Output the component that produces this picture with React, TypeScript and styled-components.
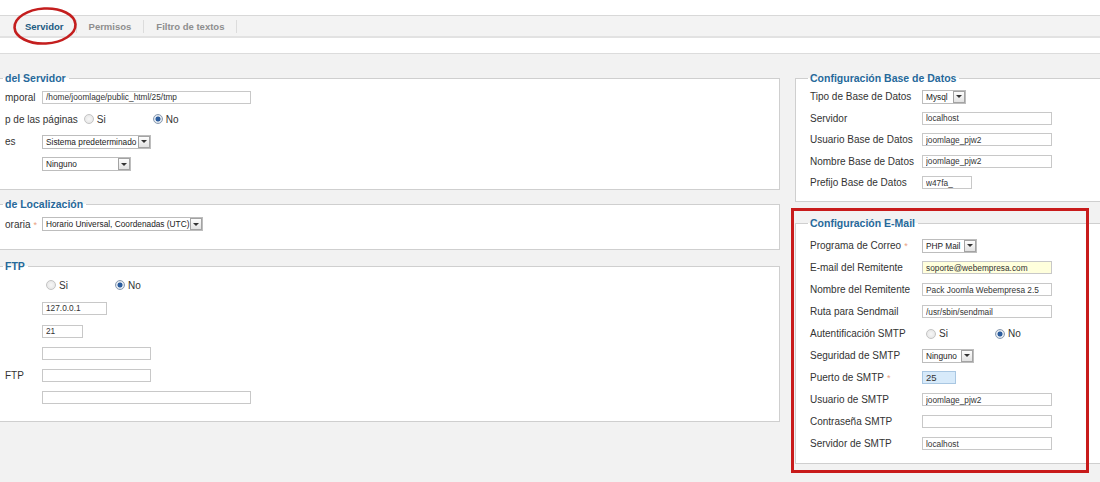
import React from "react";
import styled, { createGlobalStyle } from "styled-components";

const GlobalStyle = createGlobalStyle`
  html, body { margin: 0; padding: 0; }
  body {
    background: #fff;
    font-family: "Liberation Sans", Arial, sans-serif;
    overflow: hidden;
  }
`;

const Page = styled.div`
  position: relative;
  width: 1100px;
  height: 482px;
  overflow: hidden;
  background: #fff;
`;

const TopSpace = styled.div`
  height: 15px;
`;

const TabBar = styled.nav`
  height: 20px;
  border-top: 1px solid #d8d8d8;
  border-bottom: 2px solid #e2e2e2;
  background: #f3f3f3;
  display: flex;
  align-items: center;
  padding-left: 13px;
`;

const Tab = styled.span<{ $active?: boolean }>`
  font-size: 9.5px;
  font-weight: bold;
  line-height: 13px;
  padding: 0 12px;
  border-right: 1px solid #dcdcdc;
  color: ${(p) => (p.$active ? "#1b5b82" : "#8e8e8e")};
`;

const SubBar = styled.div`
  height: 15px;
  border-bottom: 1px solid #dcdcdc;
`;

const Content = styled.main`
  background: #f2f2f2;
  height: 428px;
  display: flex;
  align-items: flex-start;
  gap: 15px;
  padding-top: 18px;
  box-sizing: border-box;
`;

const LeftColumn = styled.div`
  flex: none;
  width: 790px;
  margin-left: -10px;
`;

const RightColumn = styled.div`
  flex: none;
  width: 330px;
`;

const Fieldset = styled.fieldset<{ $pt: number; $pb: number; $mb: number }>`
  margin: 0 0 ${(p) => p.$mb}px;
  border: 1px solid #cfcfcf;
  background: #fff;
  padding: ${(p) => p.$pt}px 0 ${(p) => p.$pb}px 14px;
  min-width: 0;
`;

const Legend = styled.legend`
  font-size: 10.5px;
  font-weight: bold;
  line-height: 13px;
  color: #26699a;
  padding: 0 3px 0 2px;
  margin-left: -2px;
`;

const Row = styled.div<{ $h?: number }>`
  display: flex;
  align-items: center;
  height: ${(p) => p.$h ?? 22}px;
`;

const Label = styled.label<{ $w: number }>`
  flex: none;
  min-width: ${(p) => p.$w}px;
  padding-right: 2px;
  box-sizing: border-box;
  font-size: 10px;
  color: #333;
  white-space: nowrap;
`;

const Req = styled.span`
  color: #eaa17e;
  font-size: 9px;
  margin-left: 3px;
`;

const Field = styled.input<{ $w: number; $tone?: "yellow" | "blue" }>`
  width: ${(p) => p.$w}px;
  height: 13px;
  box-sizing: border-box;
  margin: 0;
  padding: 0 3px;
  border: 1px solid ${(p) => (p.$tone === "blue" ? "#a9c7e2" : "#c8c8c8")};
  background: ${(p) =>
    p.$tone === "yellow" ? "#ffffdc" : p.$tone === "blue" ? "#d7eafa" : "#fff"};
  font-family: "Liberation Sans", Arial, sans-serif;
  font-size: ${(p) => (p.$tone === "blue" ? "9.5px" : "8.3px")};
  color: #333;
  outline: none;
`;

const Select = styled.div<{ $w: number }>`
  display: inline-flex;
  align-items: center;
  width: ${(p) => p.$w}px;
  height: 14px;
  box-sizing: border-box;
  border: 1px solid #bdbdbd;
  background: #fff;
  padding-left: 3px;
  font-size: 8.3px;
  color: #222;
`;

const SelectText = styled.span`
  flex: 1;
  white-space: nowrap;
  overflow: hidden;
`;

const Arrow = styled.span`
  flex: none;
  width: 12px;
  height: 12px;
  box-sizing: border-box;
  border: 1px solid #a3a3a3;
  background: linear-gradient(#fdfdfd, #e2e2e2);
  display: flex;
  align-items: center;
  justify-content: center;
  &::after {
    content: "";
    border-left: 3px solid transparent;
    border-right: 3px solid transparent;
    border-top: 3px solid #333;
  }
`;

const Options = styled.div`
  display: flex;
  margin-left: 4px;
`;

const Option = styled.span`
  display: flex;
  align-items: center;
  width: 69px;
  font-size: 10px;
  color: #333;
`;

const Radio = styled.span<{ $checked?: boolean }>`
  width: 10px;
  height: 10px;
  box-sizing: border-box;
  border-radius: 50%;
  margin-right: 3px;
  border: 1px solid ${(p) => (p.$checked ? "#8a9bb0" : "#c4c4c4")};
  background: ${(p) =>
    p.$checked
      ? "radial-gradient(circle, #2c5d9e 0 2.2px, #dfe6ee 2.8px)"
      : "radial-gradient(circle, #f7f7f7 0, #e2e2e2 100%)"};
`;

const Ellipse = styled.svg`
  position: absolute;
  left: 13px;
  top: 7px;
  overflow: visible;
`;

const Highlight = styled.div`
  position: absolute;
  left: 791px;
  top: 208px;
  width: 298px;
  height: 265px;
  box-sizing: border-box;
  border: 3.5px solid #c81b1b;
`;

const RadioPair = ({ noChecked }: { noChecked: boolean }) => (
  <Options>
    {[
      { t: "Si", c: !noChecked },
      { t: "No", c: noChecked },
    ].map((o) => (
      <Option key={o.t}>
        <Radio $checked={o.c} />
        {o.t}
      </Option>
    ))}
  </Options>
);

const Sel = ({ w, text }: { w: number; text: string }) => (
  <Select $w={w}>
    <SelectText>{text}</SelectText>
    <Arrow />
  </Select>
);

export default function App() {
  const L = 37;
  const R = 112;
  return (
    <Page>
      <GlobalStyle />
      <TopSpace />
      <TabBar>
        <Tab $active>Servidor</Tab>
        <Tab>Permisos</Tab>
        <Tab>Filtro de textos</Tab>
      </TabBar>
      <SubBar />
      <Content>
        <LeftColumn>
          <Fieldset $pt={1} $pb={14} $mb={8}>
            <Legend>del Servidor</Legend>
            <Row>
              <Label $w={L}>mporal</Label>
              <Field $w={209} readOnly defaultValue="/home/joomlage/public_html/25/tmp" />
            </Row>
            <Row>
              <Label $w={L}>p de las páginas</Label>
              <RadioPair noChecked />
            </Row>
            <Row $h={23}>
              <Label $w={L}>es</Label>
              <Sel w={109} text="Sistema predeterminado" />
            </Row>
            <Row>
              <Label $w={L} />
              <Sel w={89} text="Ninguno" />
            </Row>
          </Fieldset>
          <Fieldset $pt={2} $pb={14} $mb={10}>
            <Legend>de Localización</Legend>
            <Row>
              <Label $w={L}>
                oraria<Req>*</Req>
              </Label>
              <Sel w={161} text="Horario Universal, Coordenadas (UTC)" />
            </Row>
          </Fieldset>
          <Fieldset $pt={1} $pb={13} $mb={0}>
            <Legend>FTP</Legend>
            <Row>
              <Label $w={L} />
              <RadioPair noChecked />
            </Row>
            <Row $h={24}>
              <Label $w={L} />
              <Field $w={65} readOnly defaultValue="127.0.0.1" />
            </Row>
            <Row>
              <Label $w={L} />
              <Field $w={41} readOnly defaultValue="21" />
            </Row>
            <Row>
              <Label $w={L} />
              <Field $w={109} readOnly defaultValue="" />
            </Row>
            <Row>
              <Label $w={L}>FTP</Label>
              <Field $w={109} readOnly defaultValue="" />
            </Row>
            <Row>
              <Label $w={L} />
              <Field $w={209} readOnly defaultValue="" />
            </Row>
          </Fieldset>
        </LeftColumn>
        <RightColumn>
          <Fieldset $pt={1} $pb={7} $mb={15}>
            <Legend>Configuración Base de Datos</Legend>
            <Row $h={21.5}>
              <Label $w={R}>Tipo de Base de Datos</Label>
              <Sel w={44} text="Mysql" />
            </Row>
            <Row $h={21.5}>
              <Label $w={R}>Servidor</Label>
              <Field $w={130} readOnly defaultValue="localhost" />
            </Row>
            <Row $h={21.5}>
              <Label $w={R}>Usuario Base de Datos</Label>
              <Field $w={130} readOnly defaultValue="joomlage_pjw2" />
            </Row>
            <Row $h={21.5}>
              <Label $w={R}>Nombre Base de Datos</Label>
              <Field $w={130} readOnly defaultValue="joomlage_pjw2" />
            </Row>
            <Row $h={21.5}>
              <Label $w={R}>Prefijo Base de Datos</Label>
              <Field $w={50} readOnly defaultValue="w47fa_" />
            </Row>
          </Fieldset>
          <Fieldset $pt={5} $pb={8} $mb={0}>
            <Legend>Configuración E-Mail</Legend>
            <Row>
              <Label $w={R}>
                Programa de Correo<Req>*</Req>
              </Label>
              <Sel w={55} text="PHP Mail" />
            </Row>
            <Row>
              <Label $w={R}>E-mail del Remitente</Label>
              <Field $w={130} $tone="yellow" readOnly defaultValue="soporte@webempresa.com" />
            </Row>
            <Row>
              <Label $w={R}>Nombre del Remitente</Label>
              <Field $w={130} readOnly defaultValue="Pack Joomla Webempresa 2.5" />
            </Row>
            <Row>
              <Label $w={R}>Ruta para Sendmail</Label>
              <Field $w={130} readOnly defaultValue="/usr/sbin/sendmail" />
            </Row>
            <Row>
              <Label $w={R}>Autentificación SMTP</Label>
              <RadioPair noChecked />
            </Row>
            <Row>
              <Label $w={R}>Seguridad de SMTP</Label>
              <Sel w={52} text="Ninguno" />
            </Row>
            <Row>
              <Label $w={R}>
                Puerto de SMTP<Req>*</Req>
              </Label>
              <Field $w={34} $tone="blue" readOnly defaultValue="25" />
            </Row>
            <Row>
              <Label $w={R}>Usuario de SMTP</Label>
              <Field $w={130} readOnly defaultValue="joomlage_pjw2" />
            </Row>
            <Row>
              <Label $w={R}>Contraseña SMTP</Label>
              <Field $w={130} readOnly defaultValue="" />
            </Row>
            <Row>
              <Label $w={R}>Servidor de SMTP</Label>
              <Field $w={130} readOnly defaultValue="localhost" />
            </Row>
          </Fieldset>
        </RightColumn>
      </Content>
      <Ellipse width="64" height="38" viewBox="0 0 64 38">
        <ellipse
          cx="32"
          cy="19"
          rx="30.5"
          ry="17.5"
          fill="none"
          stroke="#c41e1e"
          strokeWidth="2.6"
          transform="rotate(-3 32 19)"
        />
      </Ellipse>
      <Highlight />
    </Page>
  );
}
